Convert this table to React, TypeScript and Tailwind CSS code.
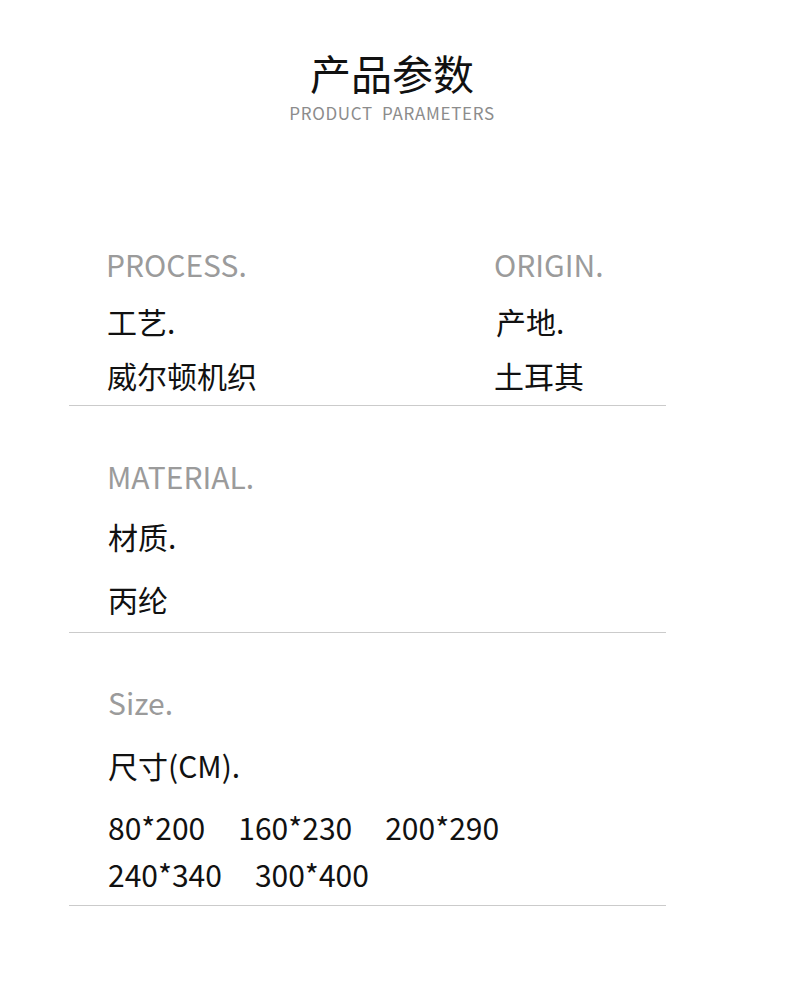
const labelClassNames = "text-[30px] leading-[30px] text-[#9b9b9b]"
const valueClassNames = "text-[30px] leading-[30px] text-[#111]"

const sizesRows = [
  ["80*200", "160*230", "200*290"],
  ["240*340", "300*400"],
]

const App = () => {
  return (
    <div
      className="w-[790px] h-[1000px] bg-white"
      style={{ fontFamily: '"Noto Sans CJK SC", "Noto Sans", sans-serif' }}>
      <div className="pt-[52px] pr-[6px] flex flex-col items-center">
        <h1 className="text-[41px] leading-[41px] text-[#111] font-normal">产品参数</h1>
        <p className="mt-[11px] text-[17px] leading-[17px] tracking-[0.7px] text-[#8c8c8c] whitespace-pre">
          PRODUCT  PARAMETERS
        </p>
      </div>

      <div className="ml-[69px] w-[597px] mt-[128px]">
        <div className="pl-[37px] pb-[15px] border-b border-[#cbcbcb] grid grid-cols-[388px_1fr]">
          <div>
            <p className={labelClassNames}>PROCESS.</p>
            <p className={valueClassNames + " mt-[27px] pl-[1px]"}>工艺.</p>
            <p className={valueClassNames + " mt-[24px] pl-[1px]"}>威尔顿机织</p>
          </div>
          <div>
            <p className={labelClassNames}>ORIGIN.</p>
            <p className={valueClassNames + " mt-[27px] pl-[2px]"}>产地.</p>
            <p className={valueClassNames + " mt-[24px]"}>土耳其</p>
          </div>
        </div>

        <div className="pl-[38px] pt-[55px] pb-[18px] border-b border-[#cbcbcb]">
          <p className={labelClassNames}>MATERIAL.</p>
          <p className={valueClassNames + " mt-[30px] pl-[1px]"}>材质.</p>
          <p className={valueClassNames + " mt-[33px] pl-[1px]"}>丙纶</p>
        </div>

        <div className="pl-[39px] pt-[54px] pb-[16px] border-b border-[#cbcbcb]">
          <p className={labelClassNames}>Size.</p>
          <p className={valueClassNames + " mt-[33px]"}>尺寸(CM).</p>
          <div className="mt-[32px] flex flex-col gap-[17px]">
            {sizesRows.map((row, index) => (
              <div key={index} className="flex gap-[33px]">
                {row.map((size) => (
                  <span key={size} className={valueClassNames}>
                    {size}
                  </span>
                ))}
              </div>
            ))}
          </div>
        </div>
      </div>
    </div>
  )
}

export default App
